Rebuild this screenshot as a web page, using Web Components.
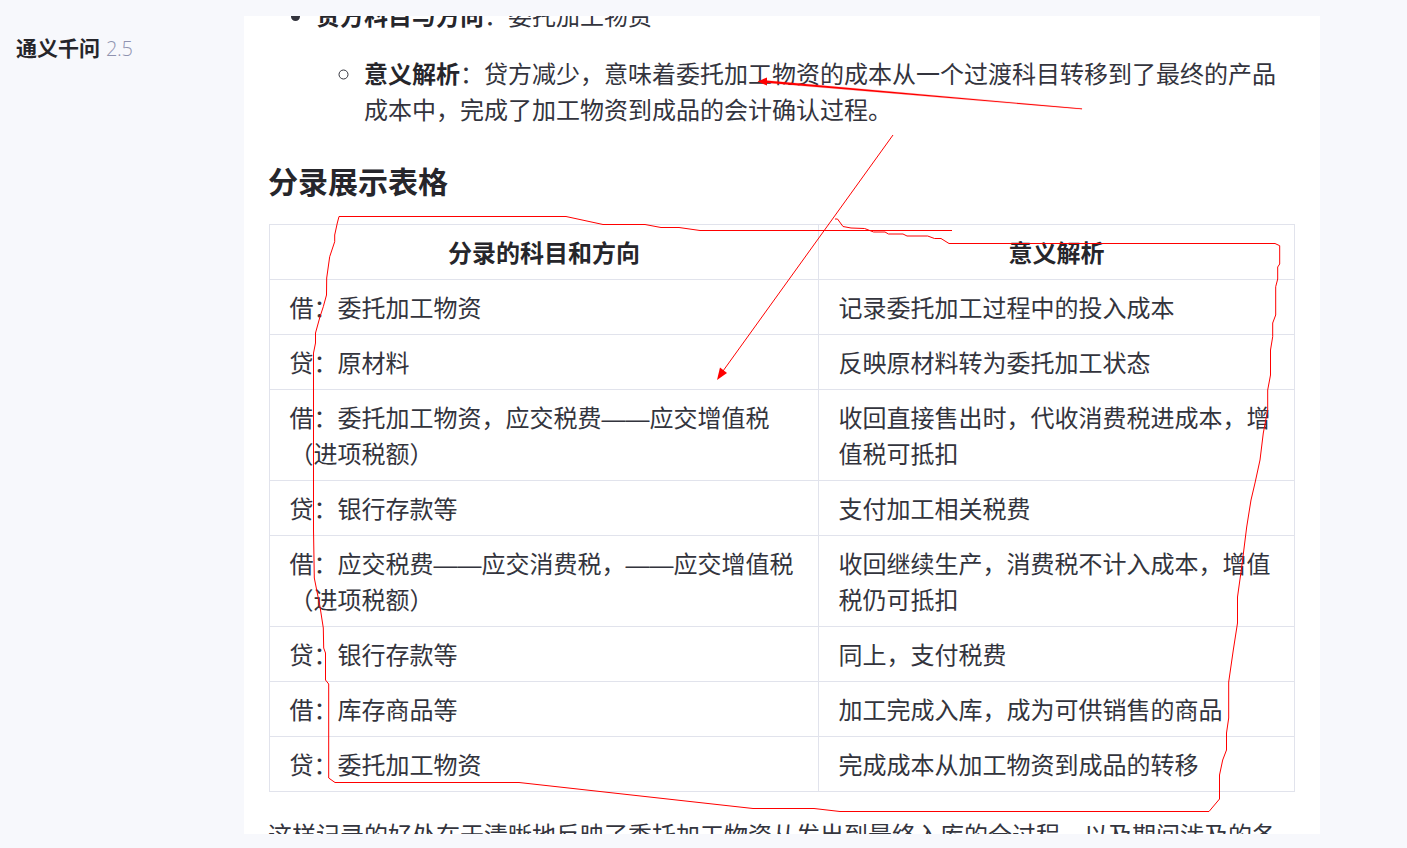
<!DOCTYPE html>
<html lang="zh-CN">
<head>
<meta charset="utf-8">
<title>通义千问</title>
<style>
	html, body {
		margin: 0;
		height: 100%;
		overflow: hidden;
		background: #f7f8fc;
	}
	body {
		font-family: "Noto Sans CJK SC", "Liberation Sans", sans-serif;
		color: #33343d;
	}
</style>
</head>
<body>
<chat-page>
	<brand-label slot="side" version="2.5">通义千问</brand-label>
	<answer-card>
		<answer-list>
			<li class="clipped"><b>贷方科目与方向</b>：委托加工物资
				<ul>
					<li><b>意义解析</b>：贷方减少，意味着委托加工物资的成本从一个过渡科目转移到了最终的产品成本中，完成了加工物资到成品的会计确认过程。</li>
				</ul>
			</li>
		</answer-list>
		<section-title>分录展示表格</section-title>
		<entry-table></entry-table>
		<answer-text>这样记录的好处在于清晰地反映了委托加工物资从发出到最终入库的全过程，以及期间涉及的各</answer-text>
	</answer-card>
	<red-marks></red-marks>
</chat-page>

<script>
(() => {

	const define_simple = (name, styles, markup) => {
		customElements.define(name,
			class extends HTMLElement {
				constructor() {
					super();
					this.attachShadow({ mode: 'open' });
					this.shadowRoot.innerHTML = `<style>${styles}</style>${markup}`;
				}
			}
		);
	};

	define_simple('chat-page', `
		:host {
			display: flex;
			position: relative;
			width: 1407px;
			height: 848px;
			background: #f7f8fc;
			overflow: hidden;
		}

		.side {
			flex: 0 0 244px;
			box-sizing: border-box;
			padding: 32px 0 0 16px;
		}
	`, `
		<div class="side"><slot name="side"></slot></div>
		<slot></slot>
	`);

	customElements.define('brand-label',
		class BrandLabel extends HTMLElement {
			constructor() {
				super();
				this.attachShadow({ mode: 'open' });
				this.shadowRoot.innerHTML = `
					<style>
						:host {
							display: flex;
							align-items: baseline;
							gap: 6px;
							font-size: 21px;
							line-height: 30px;
							font-weight: 700;
							color: #26262b;
						}

						.version {
							font-family: "Open Sans", "Liberation Sans", sans-serif;
							font-size: 20px;
							font-weight: 300;
							letter-spacing: -0.3px;
							color: #8f93b0;
						}
					</style>
					<slot></slot>
					<span class="version">${this.getAttribute('version')}</span>
				`;
			}
		}
	);

	define_simple('answer-card', `
		:host {
			display: block;
			box-sizing: border-box;
			flex: 0 0 1076px;
			height: 818px;
			margin-top: 16px;
			padding: 0 25px;
			background: #fff;
			overflow: hidden;
			font-size: 24px;
			line-height: 36px;
		}

		/* the reference is scrolled, the first line sits above the card */
		.scrolled {
			margin-top: -19px;
		}
	`, `<div class="scrolled"><slot></slot></div>`);

	customElements.define('answer-list',
		class AnswerList extends HTMLElement {
			constructor() {
				super();
				this.attachShadow({ mode: 'open' });
				this.shadowRoot.innerHTML = `
					<style>
						:host {
							display: block;
							margin-left: -1px;
						}

						ul {
							margin: 0;
							padding: 0 0 0 48px;
							list-style: disc;
						}

						ul ul {
							margin-top: 22px;
							list-style: circle;
						}

						b {
							color: #26262b;
						}
					</style>
					<ul></ul>
				`;
				this.shadowRoot.querySelector('ul').innerHTML = this.innerHTML;
			}
		}
	);

	define_simple('section-title', `
		:host {
			display: block;
			margin: 33px 0 24px -1px;
			font-size: 30px;
			line-height: 40px;
			font-weight: 700;
			color: #26262b;
		}
	`, `<slot></slot>`);

	define_simple('answer-text', `
		:host {
			display: block;
			margin: 24px 0 0 -1px;
		}
	`, `<slot></slot>`);

	const rows = [
		['借：委托加工物资', '记录委托加工过程中的投入成本'],
		['贷：原材料', '反映原材料转为委托加工状态'],
		['借：委托加工物资，应交税费——应交增值税（进项税额）', '收回直接售出时，代收消费税进成本，增值税可抵扣'],
		['贷：银行存款等', '支付加工相关税费'],
		['借：应交税费——应交消费税，——应交增值税（进项税额）', '收回继续生产，消费税不计入成本，增值税仍可抵扣'],
		['贷：银行存款等', '同上，支付税费'],
		['借：库存商品等', '加工完成入库，成为可供销售的商品'],
		['贷：委托加工物资', '完成成本从加工物资到成品的转移'],
	];

	customElements.define('entry-table',
		class EntryTable extends HTMLElement {
			constructor() {
				super();
				this.attachShadow({ mode: 'open' });
				this.shadowRoot.innerHTML = `
					<style>
						:host {
							display: block;
						}

						table {
							width: 1025px;
							table-layout: fixed;
							border-collapse: collapse;
						}

						/* latin font first: its dash has the weight of the reference, cjk falls through */
						th, td {
							padding: 11px 19.5px 7px;
							border: 1px solid #e1e3ec;
							text-align: left;
							font-family: "Liberation Sans", "Noto Sans CJK SC", sans-serif;
							font-weight: 400;
						}

						th {
							text-align: center;
							font-weight: 700;
							color: #26262b;
						}
					</style>
					<table>
						<colgroup><col style="width: 549px"><col style="width: 476px"></colgroup>
						<thead>
							<tr><th>分录的科目和方向</th><th>意义解析</th></tr>
						</thead>
						<tbody>
							${rows.map(([entry, meaning]) => `<tr><td>${entry}</td><td>${meaning}</td></tr>`).join('')}
						</tbody>
					</table>
				`;
			}
		}
	);

	// hand drawn marks on top of the screenshot, points are page coordinates
	const outline = [
		[952, 230.5], [700, 230.5], [679, 227.5], [661, 227.5], [645, 224.5], [603, 224.5], [566, 216.5],
		[339, 216.5], [337.3, 223], [334.7, 235], [334.7, 241.7], [329.7, 256.7], [326.7, 278], [326.5, 295],
		[323.3, 306.7], [320, 316.7], [315.5, 333], [315.5, 343], [313.5, 353], [313.5, 530], [314.3, 578],
		[320, 606.7], [323.3, 628], [323.7, 648], [325.5, 653], [325.5, 680], [328.7, 684], [328.7, 778],
		[335, 782.5], [519, 782.5], [753, 808.5], [814, 808.5], [840, 811.5], [1209, 811.5], [1219.5, 799],
		[1219.5, 775], [1222.7, 760], [1226.5, 750], [1226.5, 733], [1228.7, 718], [1228.7, 682], [1233.3, 650],
		[1237.5, 623], [1237.5, 597], [1241.7, 567], [1246.7, 527], [1251, 500], [1255, 483], [1260, 460],
		[1263.3, 433], [1267.7, 410], [1267.7, 390], [1270.5, 375], [1270.5, 350], [1272.7, 336.7], [1272.7, 323],
		[1275.7, 315], [1275.7, 286.7], [1277.7, 279], [1277.7, 267], [1279.7, 264], [1279.7, 245.7], [1275, 243.5],
		[949, 243.5], [941, 238.5], [934.5, 238.5], [927.7, 236], [907, 236], [903, 234], [888.5, 234],
		[885, 232], [873.6, 232], [864.6, 228.5], [851, 228], [843, 226.5], [837.5, 219], [835, 219],
	].map(point => point.join(',')).join(' ');

	define_simple('red-marks', `
		:host {
			display: block;
			position: absolute;
			inset: 0;
			pointer-events: none;
		}

		svg {
			display: block;
		}
	`, `
		<svg width="1407" height="848" viewBox="0 0 1407 848" fill="none" stroke="#f00">
			<polyline points="${outline}" stroke-width="1"/>
			<polygon points="766,80.500 1082,108.600 1082,109.200 766,82.800" fill="#f00" stroke="#f00" stroke-width="0.2"/>
			<polygon points="757.500,81.500 767,77.500 767,85.500" fill="#f00" stroke="none"/>
			<line x1="893" y1="135" x2="723" y2="371" stroke-width="1"/>
			<polygon points="717,380 720,367.500 727,373" fill="#f00" stroke="none"/>
		</svg>
	`);

})();
</script>
</body>
</html>
